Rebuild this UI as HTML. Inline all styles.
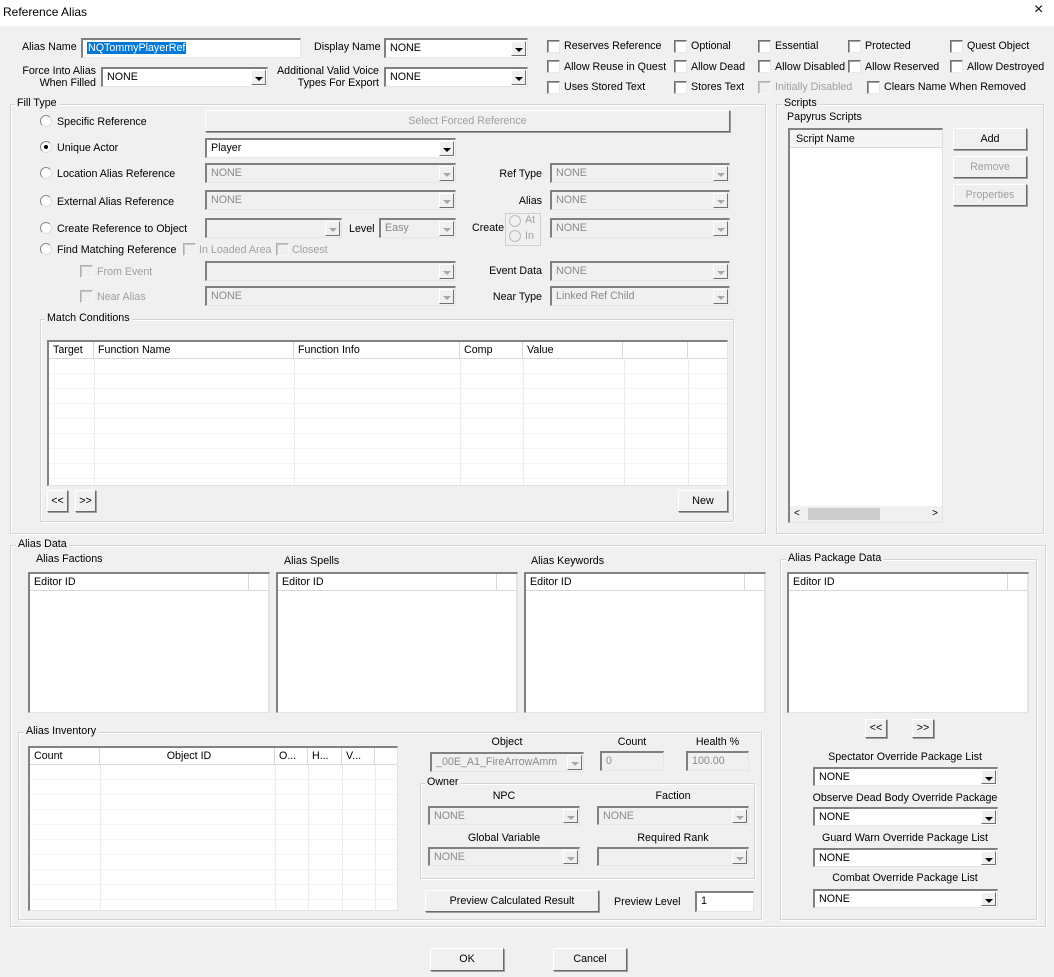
<!DOCTYPE html>
<html><head><meta charset="utf-8"><style>
*{box-sizing:border-box;margin:0;padding:0}
body{width:1054px;height:977px;background:#f0f0f0;font-family:"Liberation Sans",sans-serif;font-size:10.7px;color:#000;position:relative;overflow:hidden}
div,span{position:absolute}
.t{white-space:nowrap;line-height:14px}
.g{color:#a0a0a0}
.r{text-align:right}
.cb{width:13px;height:13px;background:#fff;border-top:1px solid #707070;border-left:1px solid #707070;border-right:1px solid #e8e8e8;border-bottom:1px solid #e8e8e8;box-shadow:inset 1px 1px 0 #a0a0a0}
.cb.d{background:#f0f0f0;box-shadow:inset 1px 1px 0 #c8c8c8;border-color:#b0b0b0 #f8f8f8 #f8f8f8 #b0b0b0}
.rd{width:12px;height:12px;border-radius:50%;border:1px solid #888;border-right-color:#ddd;border-bottom-color:#ddd;background:#fff}
.rd.on::after{content:"";position:absolute;left:3px;top:3px;width:4px;height:4px;border-radius:50%;background:#000}
.f{background:#fff;border-top:2px solid #808080;border-left:2px solid #808080;border-right:1px solid #e6e6e6;border-bottom:1px solid #e6e6e6;line-height:17px;padding-left:4px;white-space:nowrap;overflow:hidden}
.f.d{background:#f0f0f0;color:#8a8a8a}
.ar{right:1px;top:1px;bottom:1px;width:15px;background:#f0f0f0;border:1px solid;border-color:#fff #707070 #707070 #fff}
.ar::after{content:"";position:absolute;left:3px;top:6px;border-left:4px solid transparent;border-right:4px solid transparent;border-top:4px solid #000}
.d .ar::after{border-top-color:#a8a8a8}
.b{border:1px solid;border-color:#fff #6a6a6a #6a6a6a #fff;box-shadow:1px 1px 0 #a0a0a0;background:#f0f0f0;text-align:center;white-space:nowrap}
.b.d{color:#a0a0a0}
.gb{border:1px solid #d4d4d4;box-shadow:inset 1px 1px 0 #fff,1px 1px 0 #fff}
.gl{background:#f0f0f0;padding:0 2px;line-height:13px;white-space:nowrap}
.lv{background:#fff;border-top:2px solid #828282;border-left:2px solid #828282;border-right:1px solid #e3e3e3;border-bottom:1px solid #e3e3e3;overflow:hidden}
.hd{left:0;right:0;top:0;height:17px;border-bottom:1px solid #d8d8d8;background:#fff}
.hc{top:0;height:17px;border-right:1px solid #d8d8d8;line-height:17px;padding-left:4px;white-space:nowrap}
.rows{left:0;right:0;top:17px;bottom:0;background:repeating-linear-gradient(#fff 0 14px,#f4f4f4 14px 15px)}
</style></head><body>

<div style="left:0;top:0;width:1054px;height:26px;background:#fff"></div>
<div class="t" style="left:3px;top:5px;font-size:12px">Reference Alias</div>
<div class="t" style="left:1034px;top:3px;font-size:16px">×</div>

<div class="t" style="left:22px;top:40px">Alias Name</div>
<div class="f" style="left:81px;top:38px;width:220px;height:20px"><span style="position:relative;background:#0078d7;color:#fff;padding:0 1px">NQTommyPlayerRef</span></div>
<div class="t" style="left:314px;top:40px">Display Name</div>
<div class="f" style="left:384px;top:38px;width:144px;height:20px">NONE<div class="ar"></div></div>
<div class="t r" style="left:0;width:96px;top:65px;line-height:12px">Force Into Alias<br>When Filled</div>
<div class="f" style="left:101px;top:67px;width:167px;height:20px">NONE<div class="ar"></div></div>
<div class="t r" style="left:260px;width:119px;top:65px;line-height:12px">Additional Valid Voice<br>Types For Export</div>
<div class="f" style="left:384px;top:67px;width:144px;height:20px">NONE<div class="ar"></div></div>

<div class="cb" style="left:547px;top:40px"></div><div class="t" style="left:564px;top:39px">Reserves Reference</div>
<div class="cb" style="left:674px;top:40px"></div><div class="t" style="left:691px;top:39px">Optional</div>
<div class="cb" style="left:758px;top:40px"></div><div class="t" style="left:775px;top:39px">Essential</div>
<div class="cb" style="left:848px;top:40px"></div><div class="t" style="left:865px;top:39px">Protected</div>
<div class="cb" style="left:950px;top:40px"></div><div class="t" style="left:967px;top:39px">Quest Object</div>
<div class="cb" style="left:547px;top:60px"></div><div class="t" style="left:564px;top:60px">Allow Reuse in Quest</div>
<div class="cb" style="left:674px;top:60px"></div><div class="t" style="left:691px;top:60px">Allow Dead</div>
<div class="cb" style="left:758px;top:60px"></div><div class="t" style="left:775px;top:60px">Allow Disabled</div>
<div class="cb" style="left:848px;top:60px"></div><div class="t" style="left:865px;top:60px">Allow Reserved</div>
<div class="cb" style="left:950px;top:60px"></div><div class="t" style="left:967px;top:60px">Allow Destroyed</div>
<div class="cb" style="left:547px;top:81px"></div><div class="t" style="left:564px;top:80px">Uses Stored Text</div>
<div class="cb" style="left:674px;top:81px"></div><div class="t" style="left:691px;top:80px">Stores Text</div>
<div class="cb d" style="left:758px;top:81px"></div><div class="t g" style="left:775px;top:80px">Initially Disabled</div>
<div class="cb" style="left:867px;top:81px"></div><div class="t" style="left:884px;top:80px">Clears Name When Removed</div>

<div class="gb" style="left:10px;top:104px;width:756px;height:430px"></div>
<div class="gl" style="left:15px;top:97px">Fill Type</div>
<div class="rd" style="left:40px;top:115px"></div><div class="t" style="left:57px;top:115px">Specific Reference</div>
<div class="rd on" style="left:40px;top:141px"></div><div class="t" style="left:57px;top:141px">Unique Actor</div>
<div class="rd" style="left:40px;top:167px"></div><div class="t" style="left:57px;top:167px">Location Alias Reference</div>
<div class="rd" style="left:40px;top:195px"></div><div class="t" style="left:57px;top:195px">External Alias Reference</div>
<div class="rd" style="left:40px;top:222px"></div><div class="t" style="left:57px;top:222px">Create Reference to Object</div>
<div class="rd" style="left:40px;top:243px"></div><div class="t" style="left:57px;top:243px">Find Matching Reference</div>
<div class="cb d" style="left:183px;top:243px"></div><div class="t g" style="left:199px;top:243px">In Loaded Area</div>
<div class="cb d" style="left:276px;top:243px"></div><div class="t g" style="left:292px;top:243px">Closest</div>
<div class="cb d" style="left:80px;top:265px"></div><div class="t g" style="left:97px;top:265px">From Event</div>
<div class="cb d" style="left:80px;top:290px"></div><div class="t g" style="left:97px;top:290px">Near Alias</div>

<div class="b d" style="left:205px;top:110px;width:525px;height:22px;line-height:20px">Select Forced Reference</div>
<div class="f" style="left:205px;top:138px;width:251px;height:20px">Player<div class="ar"></div></div>
<div class="f d" style="left:205px;top:163px;width:251px;height:20px">NONE<div class="ar"></div></div>
<div class="f d" style="left:205px;top:190px;width:251px;height:20px">NONE<div class="ar"></div></div>
<div class="f d" style="left:205px;top:218px;width:137px;height:20px"><div class="ar"></div></div>
<div class="t" style="left:349px;top:222px">Level</div>
<div class="f d" style="left:379px;top:218px;width:77px;height:20px">Easy<div class="ar"></div></div>
<div class="f d" style="left:205px;top:261px;width:251px;height:20px"><div class="ar"></div></div>
<div class="f d" style="left:205px;top:286px;width:251px;height:20px">NONE<div class="ar"></div></div>

<div class="t r" style="left:450px;width:92px;top:167px">Ref Type</div>
<div class="f d" style="left:550px;top:163px;width:180px;height:20px">NONE<div class="ar"></div></div>
<div class="t r" style="left:450px;width:92px;top:194px">Alias</div>
<div class="f d" style="left:550px;top:190px;width:180px;height:20px">NONE<div class="ar"></div></div>
<div class="t" style="left:472px;top:221px">Create</div>
<div style="left:505px;top:213px;width:36px;height:33px;border:1px solid #d0d0d0"></div>
<div class="rd" style="left:509px;top:215px;background:#f0f0f0;border-color:#bbb"></div><div class="t g" style="left:525px;top:213px">At</div>
<div class="rd" style="left:509px;top:230px;background:#f0f0f0;border-color:#bbb"></div><div class="t g" style="left:525px;top:229px">In</div>
<div class="f d" style="left:550px;top:218px;width:180px;height:20px">NONE<div class="ar"></div></div>
<div class="t r" style="left:450px;width:92px;top:264px">Event Data</div>
<div class="f d" style="left:550px;top:261px;width:180px;height:20px">NONE<div class="ar"></div></div>
<div class="t r" style="left:450px;width:92px;top:290px">Near Type</div>
<div class="f d" style="left:550px;top:286px;width:180px;height:20px">Linked Ref Child<div class="ar"></div></div>

<div class="gb" style="left:40px;top:319px;width:694px;height:203px"></div>
<div class="gl" style="left:45px;top:312px">Match Conditions</div>
<div class="lv" style="left:47px;top:340px;width:681px;height:146px">
 <div class="rows"></div>
 <div class="hd"></div>
 <div class="hc" style="left:0;width:45px">Target</div>
 <div class="hc" style="left:45px;width:200px">Function Name</div>
 <div class="hc" style="left:245px;width:166px">Function Info</div>
 <div class="hc" style="left:411px;width:63px">Comp</div>
 <div class="hc" style="left:474px;width:100px">Value</div>
 <div class="hc" style="left:574px;width:65px"></div>
 <div style="left:45px;top:17px;bottom:0;border-left:1px solid #ececec"></div>
 <div style="left:245px;top:17px;bottom:0;border-left:1px solid #ececec"></div>
 <div style="left:411px;top:17px;bottom:0;border-left:1px solid #ececec"></div>
 <div style="left:474px;top:17px;bottom:0;border-left:1px solid #ececec"></div>
 <div style="left:575px;top:17px;bottom:0;border-left:1px solid #ececec"></div>
 <div style="left:639px;top:17px;bottom:0;border-left:1px solid #ececec"></div>
</div>
<div class="b" style="left:47px;top:490px;width:21px;height:22px;line-height:20px">&lt;&lt;</div>
<div class="b" style="left:75px;top:490px;width:21px;height:22px;line-height:20px">&gt;&gt;</div>
<div class="b" style="left:678px;top:490px;width:50px;height:22px;line-height:20px">New</div>

<div class="gb" style="left:776px;top:104px;width:268px;height:430px"></div>
<div class="gl" style="left:782px;top:97px">Scripts</div>
<div class="t" style="left:787px;top:110px">Papyrus Scripts</div>
<div class="lv" style="left:788px;top:128px;width:155px;height:395px">
 <div class="hd" style="height:18px;background:#f4f4f4"></div>
 <div class="hc" style="left:2px;width:150px;border-right:none;line-height:18px">Script Name</div>
 <div style="left:0;right:0;bottom:0;height:16px;background:#f0f0f0"></div>
 <div class="t" style="left:4px;bottom:1px;font-size:10px">&lt;</div>
 <div style="left:18px;bottom:2px;width:72px;height:12px;background:#cdcdcd"></div>
 <div class="t" style="right:4px;bottom:1px;font-size:10px">&gt;</div>
</div>
<div class="b" style="left:953px;top:128px;width:74px;height:22px;line-height:20px">Add</div>
<div class="b d" style="left:953px;top:156px;width:74px;height:22px;line-height:20px">Remove</div>
<div class="b d" style="left:953px;top:184px;width:74px;height:22px;line-height:20px">Properties</div>

<div class="gb" style="left:10px;top:545px;width:1036px;height:382px"></div>
<div class="gl" style="left:16px;top:538px">Alias Data</div>
<div class="t" style="left:36px;top:552px">Alias Factions</div>
<div class="t" style="left:284px;top:554px">Alias Spells</div>
<div class="t" style="left:531px;top:554px">Alias Keywords</div>
<div class="lv" style="left:28px;top:572px;width:242px;height:141px"><div class="hd"></div><div class="hc" style="left:0;width:219px">Editor ID</div><div style="left:238px;top:0;bottom:0;border-left:1px solid #e4e4e4"></div></div>
<div class="lv" style="left:276px;top:572px;width:242px;height:141px"><div class="hd"></div><div class="hc" style="left:0;width:219px">Editor ID</div><div style="left:238px;top:0;bottom:0;border-left:1px solid #e4e4e4"></div></div>
<div class="lv" style="left:524px;top:572px;width:242px;height:141px"><div class="hd"></div><div class="hc" style="left:0;width:219px">Editor ID</div><div style="left:238px;top:0;bottom:0;border-left:1px solid #e4e4e4"></div></div>

<div class="gb" style="left:780px;top:559px;width:257px;height:361px"></div>
<div class="gl" style="left:786px;top:552px">Alias Package Data</div>
<div class="lv" style="left:787px;top:572px;width:242px;height:141px"><div class="hd"></div><div class="hc" style="left:0;width:219px">Editor ID</div><div style="left:238px;top:0;bottom:0;border-left:1px solid #e4e4e4"></div></div>
<div class="b" style="left:865px;top:719px;width:22px;height:19px;line-height:17px">&lt;&lt;</div>
<div class="b" style="left:912px;top:719px;width:22px;height:19px;line-height:17px">&gt;&gt;</div>
<div class="t" style="left:780px;width:250px;text-align:center;top:750px">Spectator Override Package List</div>
<div class="f" style="left:813px;top:767px;width:185px;height:19px;line-height:16px">NONE<div class="ar"></div></div>
<div class="t" style="left:780px;width:250px;text-align:center;top:791px">Observe Dead Body Override Package</div>
<div class="f" style="left:813px;top:807px;width:185px;height:19px;line-height:16px">NONE<div class="ar"></div></div>
<div class="t" style="left:780px;width:250px;text-align:center;top:831px">Guard Warn Override Package List</div>
<div class="f" style="left:813px;top:848px;width:185px;height:19px;line-height:16px">NONE<div class="ar"></div></div>
<div class="t" style="left:780px;width:250px;text-align:center;top:871px">Combat Override Package List</div>
<div class="f" style="left:813px;top:889px;width:185px;height:19px;line-height:16px">NONE<div class="ar"></div></div>

<div class="gb" style="left:18px;top:732px;width:744px;height:188px"></div>
<div class="gl" style="left:24px;top:725px">Alias Inventory</div>
<div class="lv" style="left:28px;top:746px;width:370px;height:165px">
 <div class="rows"></div>
 <div class="hd"></div>
 <div class="hc" style="left:0;width:70px">Count</div>
 <div class="hc" style="left:70px;width:175px;text-align:center">Object ID</div>
 <div class="hc" style="left:245px;width:33px">O...</div>
 <div class="hc" style="left:278px;width:34px">H...</div>
 <div class="hc" style="left:312px;width:33px">V...</div>
 <div style="left:70px;top:17px;bottom:0;border-left:1px solid #ececec"></div>
 <div style="left:245px;top:17px;bottom:0;border-left:1px solid #ececec"></div>
 <div style="left:278px;top:17px;bottom:0;border-left:1px solid #ececec"></div>
 <div style="left:312px;top:17px;bottom:0;border-left:1px solid #ececec"></div>
 <div style="left:345px;top:17px;bottom:0;border-left:1px solid #ececec"></div>
</div>
<div class="t" style="left:430px;width:154px;text-align:center;top:735px">Object</div>
<div class="f d" style="left:430px;top:752px;width:154px;height:20px">_00E_A1_FireArrowAmm<div class="ar"></div></div>
<div class="t" style="left:600px;width:64px;text-align:center;top:735px">Count</div>
<div class="f d" style="left:600px;top:751px;width:64px;height:20px">0</div>
<div class="t" style="left:686px;width:63px;text-align:center;top:735px">Health %</div>
<div class="f d" style="left:686px;top:751px;width:63px;height:20px">100.00</div>
<div class="gb" style="left:420px;top:783px;width:335px;height:96px"></div>
<div class="gl" style="left:425px;top:776px">Owner</div>
<div class="t" style="left:428px;width:152px;text-align:center;top:789px">NPC</div>
<div class="f d" style="left:428px;top:806px;width:152px;height:19px;line-height:16px">NONE<div class="ar"></div></div>
<div class="t" style="left:597px;width:152px;text-align:center;top:789px">Faction</div>
<div class="f d" style="left:597px;top:806px;width:152px;height:19px;line-height:16px">NONE<div class="ar"></div></div>
<div class="t" style="left:428px;width:152px;text-align:center;top:831px">Global Variable</div>
<div class="f d" style="left:428px;top:847px;width:152px;height:19px;line-height:16px">NONE<div class="ar"></div></div>
<div class="t" style="left:597px;width:152px;text-align:center;top:831px">Required Rank</div>
<div class="f d" style="left:597px;top:847px;width:152px;height:19px"><div class="ar"></div></div>
<div class="b" style="left:425px;top:890px;width:174px;height:22px;line-height:20px">Preview Calculated Result</div>
<div class="t" style="left:614px;top:895px">Preview Level</div>
<div class="f" style="left:695px;top:891px;width:59px;height:21px">1</div>

<div class="b" style="left:430px;top:948px;width:74px;height:23px;line-height:21px">OK</div>
<div class="b" style="left:553px;top:948px;width:74px;height:23px;line-height:21px">Cancel</div>
</body></html>
